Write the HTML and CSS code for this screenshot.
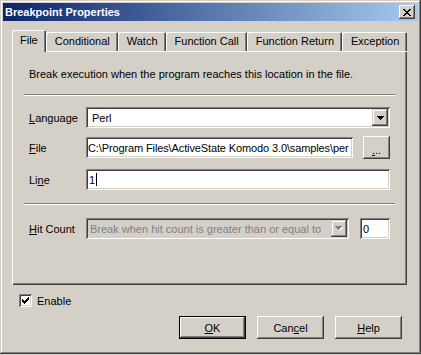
FILE: index.html
```html
<!DOCTYPE html>
<html lang="en">
<head>
  <meta charset="UTF-8">
  <title>Breakpoint Properties</title>
  <link rel="stylesheet" href="styles.css">
</head>
<body>
  <div class="window">
    <div class="titlebar">
      <span class="title">Breakpoint Properties</span>
      <button class="close-btn">
        <svg width="8" height="7" viewBox="0 0 8 7" shape-rendering="crispEdges">
          <path d="M0 0h2v1h-2z M6 0h2v1h-2z M1 1h2v1h-2z M5 1h2v1h-2z M2 2h4v1h-4z M3 3h2v1h-2z M2 4h4v1h-4z M1 5h2v1h-2z M5 5h2v1h-2z M0 6h2v1h-2z M6 6h2v1h-2z" fill="#000"/>
        </svg>
      </button>
    </div>

    <div class="dialog">
      <!-- Tabs -->
      <div class="tabs">
        <div class="tab active">File</div>
        <div class="tab">Conditional</div>
        <div class="tab">Watch</div>
        <div class="tab">Function Call</div>
        <div class="tab">Function Return</div>
        <div class="tab">Exception</div>
      </div>

      <div class="panel">
        <p class="desc">Break execution when the program reaches this location in the file.</p>
        <div class="sep"></div>

        <div class="form-row">
          <label><u>L</u>anguage</label>
          <div class="field combo">
            <span class="combo-text">Perl</span>
            <span class="combo-btn">
              <svg width="7" height="4" viewBox="0 0 7 4" shape-rendering="crispEdges"><path d="M0 0h7v1h-7z M1 1h5v1h-5z M2 2h3v1h-3z M3 3h1v1h-1z" fill="#000"/></svg>
            </span>
          </div>
        </div>

        <div class="form-row row-file">
          <label><u>F</u>ile</label>
          <div class="field edit path">C:\Program Files\ActiveState Komodo 3.0\samples\per</div>
          <button class="btn btn-browse"><u>.</u>..</button>
        </div>

        <div class="form-row row-line">
          <label>Li<u>n</u>e</label>
          <div class="field edit">1<span class="caret"></span></div>
        </div>

        <div class="sep sep-lower"></div>

        <div class="form-row row-hit">
          <label><u>H</u>it Count</label>
          <div class="field combo disabled">
            <span class="combo-text">Break when hit count is greater than or equal to</span>
            <span class="combo-btn">
              <svg width="8" height="5" viewBox="0 0 8 5" shape-rendering="crispEdges"><path d="M1 1h7v1h-7z M2 2h5v1h-5z M3 3h3v1h-3z M4 4h1v1h-1z" fill="#fff"/><path d="M0 0h7v1h-7z M1 1h5v1h-5z M2 2h3v1h-3z M3 3h1v1h-1z" fill="#808080"/></svg>
            </span>
          </div>
          <div class="field edit count">0</div>
        </div>
      </div>

      <label class="check-row">
        <span class="checkbox">
          <svg width="7" height="7" viewBox="0 0 7 7" shape-rendering="crispEdges"><path d="M6 0h1v1h-1z M5 1h2v1h-2z M0 2h1v1h-1z M4 2h3v1h-3z M0 3h2v1h-2z M3 3h3v1h-3z M0 4h5v1h-5z M1 5h3v1h-3z M2 6h1v1h-1z" fill="#000"/></svg>
        </span>
        Enable
      </label>

      <div class="buttons">
        <button class="btn btn-default"><u>O</u>K</button>
        <button class="btn">Can<u>c</u>el</button>
        <button class="btn"><u>H</u>elp</button>
      </div>
    </div>
  </div>
</body>
</html>
```

FILE: styles.css
```css
* {
  margin: 0;
  padding: 0;
  box-sizing: border-box;
}

body {
  background: #d4d0c8;
  font-family: "Liberation Sans", Arial, sans-serif;
  font-size: 11px;
  color: #000;
}

u {
  text-decoration: underline;
  text-underline-offset: 1px;
}

.window {
  width: 421px;
  height: 354px;
  padding: 3px;
  background: #d4d0c8;
  box-shadow: inset -1px -1px #404040, inset 1px 1px #d4d0c8, inset -2px -2px #808080, inset 2px 2px #fff;
}

/* Title bar */
.titlebar {
  height: 18px;
  display: flex;
  align-items: center;
  justify-content: space-between;
  padding: 0 3px 0 2px;
  background: linear-gradient(to right, #0a246a, #a6caf0);
}

.title {
  color: #fff;
  font-weight: bold;
  font-size: 11px;
}

.close-btn {
  width: 16px;
  height: 14px;
  border: none;
  background: #d4d0c8;
  display: flex;
  align-items: center;
  justify-content: center;
  box-shadow: inset -1px -1px #404040, inset 1px 1px #fff, inset -2px -2px #808080, inset 2px 2px #d4d0c8;
}

.dialog {
  padding: 9px 0 0 9px;
}

/* Tabs */
.tabs {
  display: flex;
  align-items: flex-end;
  height: 21px;
  width: 395px;
}

.tab {
  height: 19px;
  padding: 0 8px 0 9px;
  line-height: 18px;
  background: #d4d0c8;
  border-radius: 2px 2px 0 0;
  box-shadow: inset 1px 1px #fff, inset -1px 0 #404040, inset -2px 0 #808080;
  white-space: nowrap;
}

.tab.active {
  height: 22px;
  padding: 0 8px;
  line-height: 20px;
  margin-bottom: -1px;
  position: relative;
  z-index: 1;
}

/* Tab page */
.panel {
  width: 395px;
  height: 234px;
  padding: 17px 12px 0 12px;
  box-shadow: inset 1px 1px #fff, inset -1px -1px #404040, inset -2px -2px #808080;
}

.desc {
  line-height: 13px;
  padding-left: 5px;
  white-space: nowrap;
}

.sep {
  height: 2px;
  margin-top: 13px;
  border-top: 1px solid #808080;
  border-bottom: 1px solid #fff;
}

.sep-lower {
  margin-top: 13px;
}

.form-row {
  display: grid;
  grid-template-columns: 57px minmax(0, 1fr);
  align-items: center;
  margin-top: 11px;
  padding: 0 5px;
  height: 21px;
}

.row-file {
  grid-template-columns: 57px minmax(0, 1fr) auto;
  height: 23px;
  margin-top: 8px;
}

.row-line {
  margin-top: 10px;
}

.row-hit {
  grid-template-columns: 57px minmax(0, 1fr) auto;
  margin-top: 13px;
}

.field {
  height: 21px;
  background: #fff;
  display: flex;
  align-items: center;
  overflow: hidden;
  white-space: nowrap;
  box-shadow: inset 1px 1px #808080, inset -1px -1px #fff, inset 2px 2px #404040, inset -2px -2px #d4d0c8;
}

.edit {
  padding: 0 3px;
}

.path {
  padding: 0 2px;
  letter-spacing: -0.12px;
}

.count {
  width: 30px;
  margin-left: 11px;
}

.combo {
  padding: 2px 2px 2px 6px;
  justify-content: space-between;
}

.combo-text {
  overflow: hidden;
}

.combo-btn {
  width: 16px;
  height: 17px;
  flex-shrink: 0;
  background: #d4d0c8;
  display: flex;
  align-items: center;
  justify-content: center;
  box-shadow: inset -1px -1px #404040, inset 1px 1px #d4d0c8, inset -2px -2px #808080, inset 2px 2px #fff;
}

.combo.disabled {
  background: #d4d0c8;
  color: #808080;
  padding-left: 4px;
}

.caret {
  display: inline-block;
  width: 1px;
  height: 13px;
  margin-left: 1px;
  background: #000;
}

/* Buttons */
.btn {
  width: 67px;
  height: 23px;
  border: none;
  background: #d4d0c8;
  font: inherit;
  color: #000;
  box-shadow: inset -1px -1px #404040, inset 1px 1px #fff, inset -2px -2px #808080, inset 2px 2px #d4d0c8;
}

.btn-default {
  box-shadow: inset 0 0 0 1px #000, inset -2px -2px #404040, inset 2px 2px #fff, inset -3px -3px #808080;
}

.btn-browse {
  width: 27px;
  margin-left: 10px;
  padding-top: 4px;
}

.check-row {
  display: flex;
  align-items: center;
  gap: 5px;
  margin: 9px 0 0 7px;
  height: 13px;
}

.checkbox {
  width: 13px;
  height: 13px;
  background: #fff;
  display: flex;
  align-items: center;
  justify-content: center;
  box-shadow: inset 1px 1px #808080, inset -1px -1px #fff, inset 2px 2px #404040, inset -2px -2px #d4d0c8;
}

.buttons {
  display: flex;
  justify-content: flex-end;
  gap: 11px;
  width: 395px;
  padding-right: 5px;
  margin-top: 9px;
}
```
